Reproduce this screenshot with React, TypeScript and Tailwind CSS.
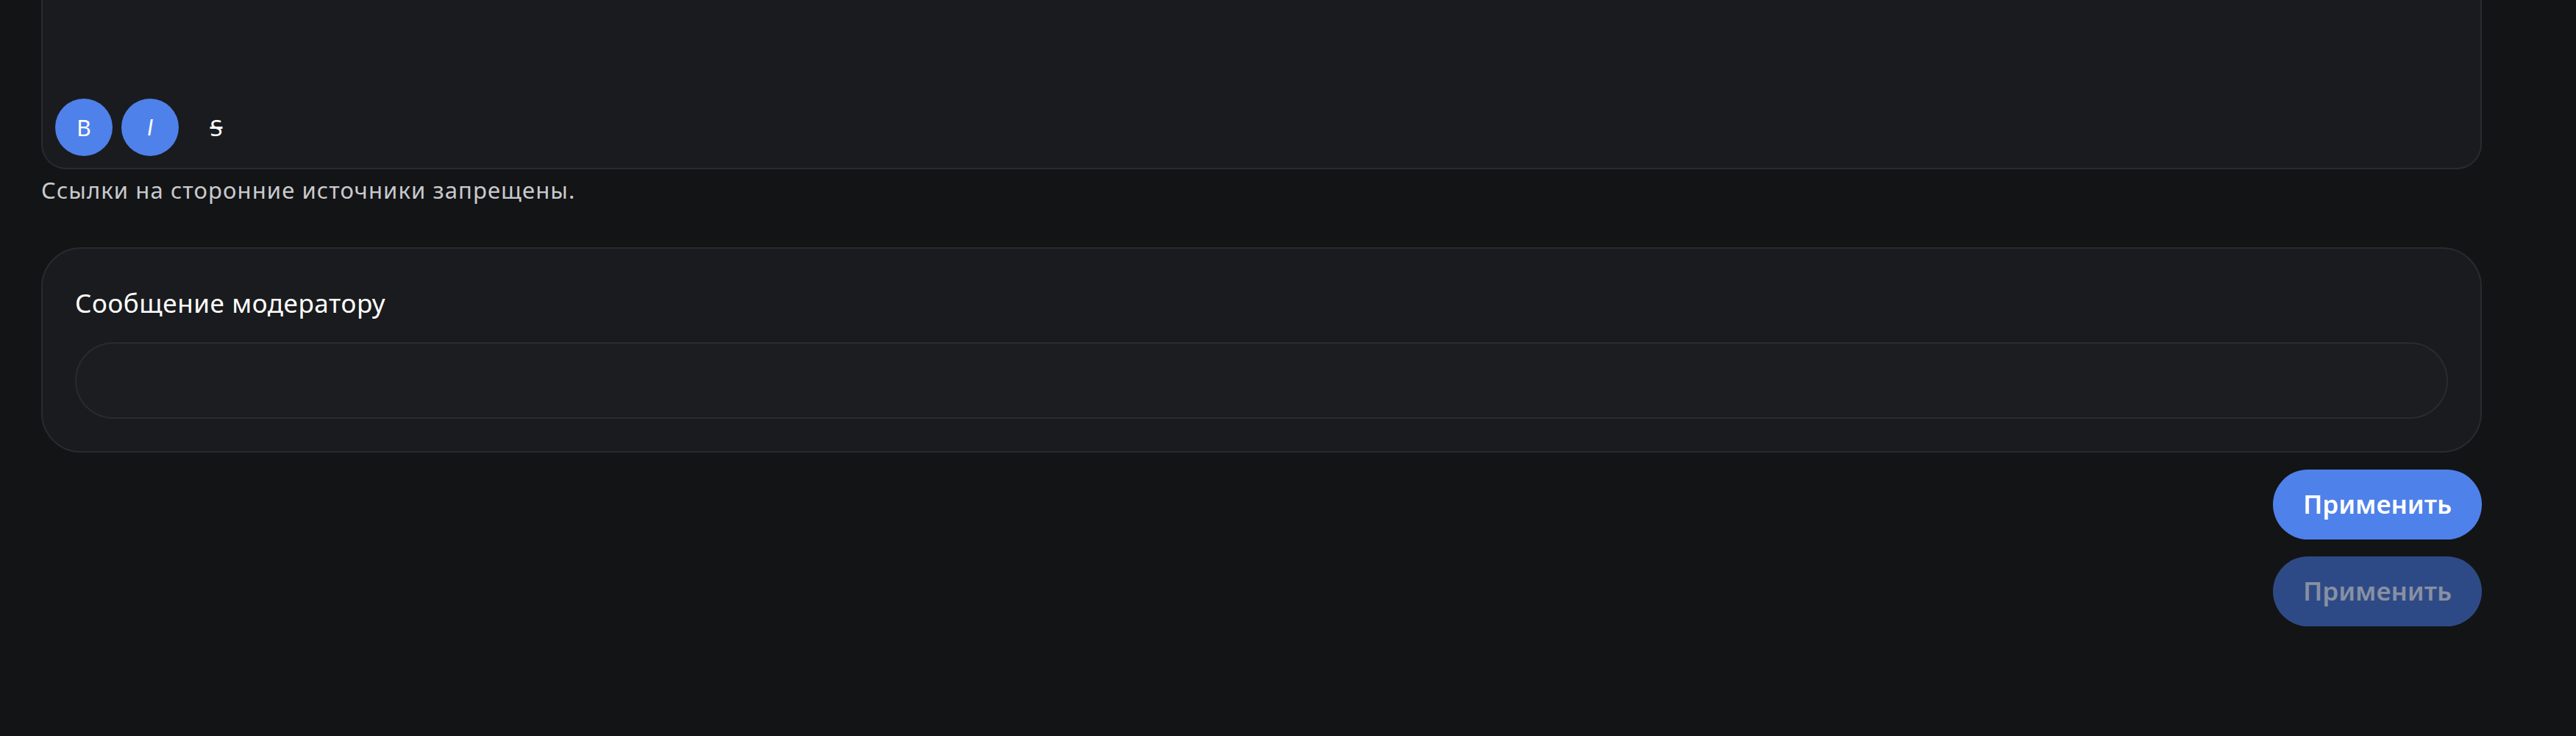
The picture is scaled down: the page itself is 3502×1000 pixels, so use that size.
import React from 'react';

const font = { fontFamily: '"Noto Sans", "Open Sans", sans-serif' };

const ToolButton: React.FC<{ label: string; className?: string; active?: boolean }> = ({ label, className, active }) => (
  <button
    className={`w-[78px] h-[78px] rounded-full flex items-center justify-center text-[30px] text-white ${active ? 'bg-[#4f81ea]' : 'bg-transparent'} ${className || ''}`}
  >
    {label}
  </button>
);

export default function App() {
  return (
    <div className="min-h-screen w-full bg-[#131416] text-white" style={font}>
      <div className="ml-[56px] w-[3318px] flex flex-col">
        {/* Редактор */}
        <div className="h-[230px] bg-[#1a1b1e] border-2 border-t-0 border-[#2a2b2f] rounded-b-[34px] flex flex-col justify-end pl-[17px] pb-[16px]">
          <div className="flex items-center gap-[12px]">
            <ToolButton label="B" active />
            <ToolButton label="I" active className="italic font-['Inter',sans-serif]" />
            <ToolButton label="S" className="line-through text-[31px]" />
          </div>
        </div>
        <p className="mt-[7px] text-[31px] leading-[42px] tracking-[1.1px] text-[#c9cacd]">Ссылки на сторонние источники запрещены.</p>

        {/* Сообщение модератору */}
        <div className="mt-[57px] bg-[#1a1b1e] border-2 border-[#2a2b2f] rounded-[54px] px-[44px] pt-[50px] pb-[44px]">
          <div className="text-[35px] leading-[48px] tracking-[0.6px] text-white">Сообщение модератору</div>
          <input
            className="mt-[29px] w-full h-[104px] rounded-full bg-[#1c1d21] border-2 border-[#2a2b2f] outline-none px-[40px] text-[32px] text-white"
          />
        </div>

        <div className="mt-[23px] flex flex-col items-end gap-[23px]">
          <button className="w-[284px] h-[95px] rounded-full bg-[#4f81ea] text-white text-[35px] font-semibold">
            Применить
          </button>
          <button disabled className="w-[284px] h-[95px] rounded-full bg-[#2e4a86] text-[#8790a3] text-[35px] font-semibold">
            Применить
          </button>
        </div>
      </div>
    </div>
  );
}
